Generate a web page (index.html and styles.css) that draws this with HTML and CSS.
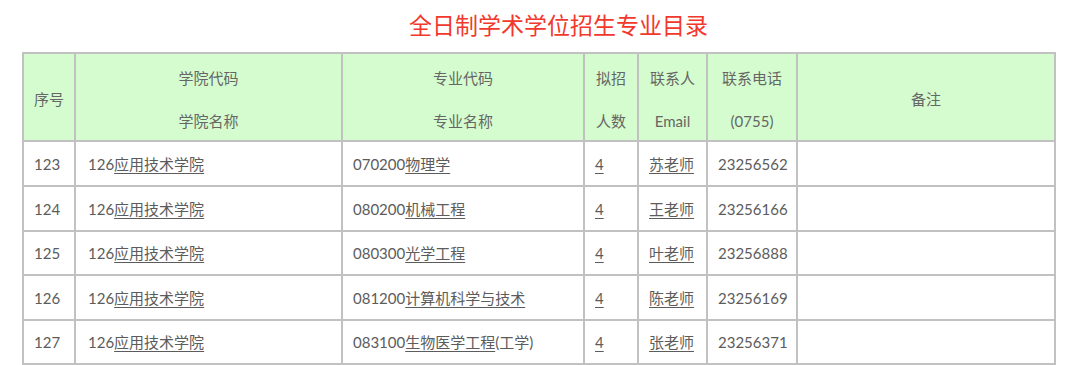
FILE: index.html
```html
<!DOCTYPE html>
<html lang="zh">
<head>
<meta charset="utf-8">
<title>全日制学术学位招生专业目录</title>
<link rel="stylesheet" href="styles.css">
</head>
<body>
<div class="page">
  <h1 class="title">全日制学术学位招生专业目录</h1>
  <table class="catalog">
    <colgroup>
      <col class="c-no">
      <col class="c-school">
      <col class="c-major">
      <col class="c-num">
      <col class="c-contact">
      <col class="c-phone">
      <col class="c-note">
    </colgroup>
    <thead>
      <tr>
        <th>序号</th>
        <th><div class="hl">学院代码</div><div class="hl second">学院名称</div></th>
        <th><div class="hl">专业代码</div><div class="hl second">专业名称</div></th>
        <th><div class="hl">拟招</div><div class="hl second">人数</div></th>
        <th><div class="hl">联系人</div><div class="hl second">Email</div></th>
        <th><div class="hl">联系电话</div><div class="hl second">(0755)</div></th>
        <th>备注</th>
      </tr>
    </thead>
    <tbody>
      <tr class="r45">
        <td>123</td>
        <td class="school">126<span class="u">应用技术学院</span></td>
        <td>070200<span class="u">物理学</span></td>
        <td><span class="u">4</span></td>
        <td><span class="u">苏老师</span></td>
        <td>23256562</td>
        <td></td>
      </tr>
      <tr class="r45">
        <td>124</td>
        <td class="school">126<span class="u">应用技术学院</span></td>
        <td>080200<span class="u">机械工程</span></td>
        <td><span class="u">4</span></td>
        <td><span class="u">王老师</span></td>
        <td>23256166</td>
        <td></td>
      </tr>
      <tr class="r44">
        <td>125</td>
        <td class="school">126<span class="u">应用技术学院</span></td>
        <td>080300<span class="u">光学工程</span></td>
        <td><span class="u">4</span></td>
        <td><span class="u">叶老师</span></td>
        <td>23256888</td>
        <td></td>
      </tr>
      <tr class="r45">
        <td>126</td>
        <td class="school">126<span class="u">应用技术学院</span></td>
        <td>081200<span class="u">计算机科学与技术</span></td>
        <td><span class="u">4</span></td>
        <td><span class="u">陈老师</span></td>
        <td>23256169</td>
        <td></td>
      </tr>
      <tr class="r44">
        <td>127</td>
        <td class="school">126<span class="u">应用技术学院</span></td>
        <td>083100<span class="u">生物医学工程</span>(工学)</td>
        <td><span class="u">4</span></td>
        <td><span class="u">张老师</span></td>
        <td>23256371</td>
        <td></td>
      </tr>
    </tbody>
  </table>
</div>
</body>
</html>
```

FILE: styles.css
```css
html, body {
  margin: 0;
  padding: 0;
  background: #ffffff;
}

.page {
  width: 1080px;
  font-family: "Lato", "Noto Sans CJK SC", sans-serif;
  color: #5e5e5e;
}

.title {
  margin: 0;
  padding: 9px 0 0 37px;
  height: 30px;
  line-height: 30px;
  font-size: 23px;
  font-weight: normal;
  text-align: center;
  color: #f2382c;
  font-family: "Noto Sans CJK SC", sans-serif;
}

.catalog {
  margin: 13px 0 0 22px;
  border-collapse: collapse;
  table-layout: fixed;
  width: 1032px;
  font-size: 15px;
}

.c-no { width: 52px; }
.c-school { width: 267px; }
.c-major { width: 242px; }
.c-num { width: 54px; }
.c-contact { width: 69px; }
.c-phone { width: 90px; }
.c-note { width: 258px; }

.catalog th,
.catalog td {
  border: 2px solid #c1c1c1;
}

.catalog thead tr {
  height: 88px;
}

.catalog th {
  background: #d5fcce;
  font-weight: normal;
  color: #666666;
  text-align: center;
  vertical-align: middle;
  padding: 4px 0 0;
  line-height: 20px;
}

.hl {
  line-height: 20px;
}

.hl.second {
  margin-top: 23px;
}

.catalog td {
  padding: 0 0 0 10px;
  vertical-align: middle;
  line-height: 20px;
  white-space: nowrap;
  color: #5c5c5c;
}

.catalog td.school {
  padding-left: 12px;
}

.r45 { height: 45px; }
.r44 { height: 44px; }

.u {
  text-decoration: underline;
  text-underline-offset: 3px;
  text-decoration-thickness: 1px;
}
```
